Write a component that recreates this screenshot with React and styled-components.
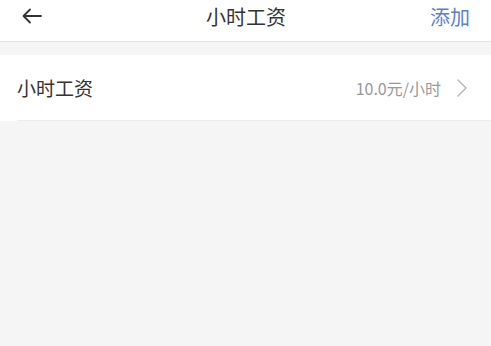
import React from "react";
import styled, { createGlobalStyle } from "styled-components";

const GlobalStyle = createGlobalStyle`
  html, body {
    margin: 0;
    padding: 0;
    background: #f5f5f5;
    font-family: "Noto Sans CJK SC", "Noto Sans", sans-serif;
  }
`;

const Page = styled.div`
  display: flex;
  flex-direction: column;
  min-height: 346px;
  background: #f5f5f5;
`;

const TopBar = styled.div`
  display: grid;
  grid-template-columns: 80px 1fr 80px;
  align-items: center;
  height: 41px;
  padding: 0 21px 0 22px;
  background: #fff;
  border-bottom: 1px solid #e2e2e2;
`;

const BackBtn = styled.button`
  display: flex;
  align-items: center;
  padding: 0;
  border: none;
  background: none;
  cursor: pointer;
  margin-top: -9px;
`;

const Title = styled.span`
  text-align: center;
  font-size: 20px;
  color: #333;
  margin-top: -9px;
`;

const AddBtn = styled.span`
  text-align: right;
  font-size: 20px;
  color: #5a7fd0;
  margin-top: -9px;
`;

const List = styled.ul`
  list-style: none;
  margin: 13px 0 0 0;
  padding: 0;
  background: #fff;
`;

const Item = styled.li`
  display: flex;
  align-items: center;
  justify-content: space-between;
  height: 65px;
  margin-left: 17px;
  padding-right: 24px;
  border-bottom: 1px solid #ececec;
`;

const Label = styled.span`
  font-size: 19px;
  color: #333;
`;

const Value = styled.span`
  display: flex;
  align-items: center;
  gap: 16px;
  font-size: 16px;
  color: #999;
`;

function App() {
  return (
    <Page>
      <GlobalStyle />
      <TopBar>
        <BackBtn>
          <svg width="20" height="16" viewBox="0 0 20 16" fill="none" stroke="#333" strokeWidth="1.8" strokeLinecap="round" strokeLinejoin="round">
            <path d="M19 8H1.5M8 1.5L1.5 8L8 14.5" />
          </svg>
        </BackBtn>
        <Title>小时工资</Title>
        <AddBtn>添加</AddBtn>
      </TopBar>
      <List>
        <Item>
          <Label>小时工资</Label>
          <Value>
            10.0元/小时
            <svg width="10" height="18" viewBox="0 0 10 18" fill="none" stroke="#b5b5b5" strokeWidth="1.4" strokeLinecap="round" strokeLinejoin="round">
              <path d="M1 1L9 9L1 17" />
            </svg>
          </Value>
        </Item>
      </List>
    </Page>
  );
}

export default App;
